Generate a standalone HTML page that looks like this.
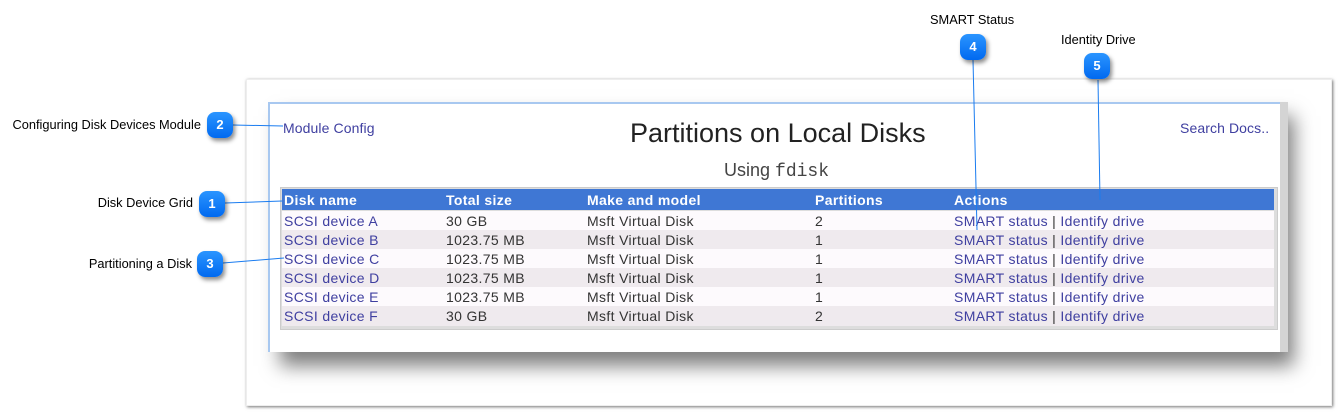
<!DOCTYPE html>
<html><head><style>
body{margin:0;width:1339px;height:412px;background:#fff;position:relative;overflow:hidden;font-family:"Liberation Sans",Arial,sans-serif}
.a{position:absolute}
.lbl{position:absolute;font-size:12.8px;color:#000;white-space:nowrap}
.b{position:absolute;width:26px;height:26px;border-radius:8px;background:linear-gradient(#2b95ff,#0069f0);color:#fff;font-size:13px;font-weight:bold;text-align:center;line-height:26px;box-shadow:2px 3px 4px rgba(0,0,0,.45)}
.t{position:absolute;font-size:14px;color:#333;white-space:nowrap;letter-spacing:0.35px}
.lk{color:#3f3fa0}
</style></head><body>
<div class="a" style="left:246px;top:79px;width:1084px;height:325px;background:#fff;box-shadow:1px 1px 3px rgba(0,0,0,.55);border:1px solid #eee"></div>
<div class="a" style="left:268px;top:102px;width:1012px;height:248px;background:#fff;border-top:2px solid #a8c8f0;border-left:2px solid #a8c8f0;box-shadow:12px 14px 18px rgba(0,0,0,.5)"></div>
<div class="a" style="left:1280px;top:102px;width:8px;height:250px;background:#d4d4d4"></div>
<div class="t lk" style="left:283px;top:120px;letter-spacing:0.1px">Module Config</div>
<div class="t lk" style="left:1180px;top:120px;letter-spacing:0.1px">Search Docs..</div>
<div class="t" style="left:630px;top:118px;font-size:27px;color:#222;letter-spacing:0">Partitions on Local Disks</div>
<div class="t" style="left:724px;top:160px;font-size:18px;color:#444;letter-spacing:0">Using <span style="font-family:'Liberation Mono',monospace">fdisk</span></div>
<div class="a" style="left:280px;top:187px;width:996px;height:141px;background:#ddd;border:1px solid #ccc"></div>
<div class="a" style="left:282px;top:189px;width:992px;height:21px;background:#3f77d4"></div>
<div class="t" style="left:284px;top:192px;color:#fff;font-weight:bold">Disk name</div>
<div class="t" style="left:446px;top:192px;color:#fff;font-weight:bold">Total size</div>
<div class="t" style="left:587px;top:192px;color:#fff;font-weight:bold">Make and model</div>
<div class="t" style="left:815px;top:192px;color:#fff;font-weight:bold">Partitions</div>
<div class="t" style="left:954px;top:192px;color:#fff;font-weight:bold">Actions</div>
<div class="a" style="left:282px;top:211px;width:992px;height:19px;background:#fdfafd"></div>
<div class="a" style="left:282px;top:230px;width:992px;height:19px;background:#efeaee"></div>
<div class="a" style="left:282px;top:249px;width:992px;height:19px;background:#fdfafd"></div>
<div class="a" style="left:282px;top:268px;width:992px;height:19px;background:#efeaee"></div>
<div class="a" style="left:282px;top:287px;width:992px;height:19px;background:#fdfafd"></div>
<div class="a" style="left:282px;top:306px;width:992px;height:20px;background:#efeaee"></div>
<div class="t" style="left:284px;top:212px;line-height:19px"><span class="lk">SCSI device A</span><br><span class="lk">SCSI device B</span><br><span class="lk">SCSI device C</span><br><span class="lk">SCSI device D</span><br><span class="lk">SCSI device E</span><br><span class="lk">SCSI device F</span></div>
<div class="t" style="left:446px;top:212px;line-height:19px">30 GB<br>1023.75 MB<br>1023.75 MB<br>1023.75 MB<br>1023.75 MB<br>30 GB</div>
<div class="t" style="left:587px;top:212px;line-height:19px">Msft Virtual Disk<br>Msft Virtual Disk<br>Msft Virtual Disk<br>Msft Virtual Disk<br>Msft Virtual Disk<br>Msft Virtual Disk</div>
<div class="t" style="left:815px;top:212px;line-height:19px">2<br>1<br>1<br>1<br>1<br>2</div>
<div class="t" style="left:954px;top:212px;line-height:19px"><span class="lk">SMART status</span> | <span class="lk">Identify drive</span><br><span class="lk">SMART status</span> | <span class="lk">Identify drive</span><br><span class="lk">SMART status</span> | <span class="lk">Identify drive</span><br><span class="lk">SMART status</span> | <span class="lk">Identify drive</span><br><span class="lk">SMART status</span> | <span class="lk">Identify drive</span><br><span class="lk">SMART status</span> | <span class="lk">Identify drive</span></div>
<svg class="a" style="left:0;top:0" width="1339" height="412">
<g stroke="#1a7cf0" stroke-width="1" fill="none">
<line x1="233" y1="125" x2="283" y2="126"/>
<line x1="225" y1="203" x2="282" y2="201"/>
<line x1="223" y1="263" x2="284" y2="258"/>
<line x1="973" y1="60" x2="977" y2="230"/>
<line x1="1098" y1="80" x2="1100" y2="200"/>
</g></svg>
<div class="lbl" style="right:1138px;top:117px">Configuring Disk Devices Module</div>
<div class="lbl" style="right:1146px;top:195px">Disk Device Grid</div>
<div class="lbl" style="right:1147px;top:256px">Partitioning a Disk</div>
<div class="lbl" style="left:930px;top:12px">SMART Status</div>
<div class="lbl" style="left:1061px;top:32px">Identity Drive</div>
<div class="b" style="left:207px;top:112px">2</div>
<div class="b" style="left:199px;top:191px">1</div>
<div class="b" style="left:197px;top:251px">3</div>
<div class="b" style="left:960px;top:34px">4</div>
<div class="b" style="left:1084px;top:53px">5</div>
</body></html>
